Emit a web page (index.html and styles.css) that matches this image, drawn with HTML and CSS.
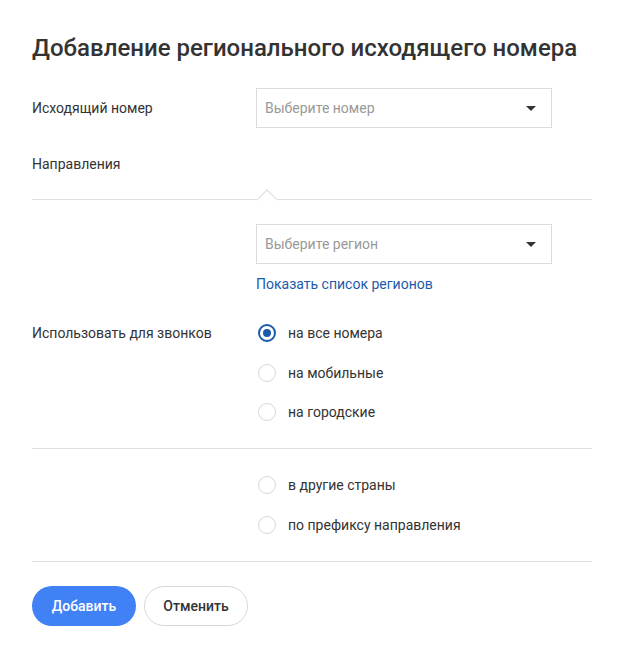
FILE: index.html
```html
<!DOCTYPE html>
<html lang="ru">
<head>
<meta charset="utf-8">
<title>Добавление регионального исходящего номера</title>
<link rel="stylesheet" href="styles.css">
</head>
<body>
<div class="page">
  <h1 class="title">Добавление регионального исходящего номера</h1>

  <div class="row row-number">
    <div class="label">Исходящий номер</div>
    <div class="select">
      <span class="placeholder">Выберите номер</span>
      <span class="caret"></span>
    </div>
  </div>

  <div class="section-label">Направления</div>

  <div class="divider notched"><span class="notch"></span></div>

  <div class="row row-region">
    <div class="label"></div>
    <div class="field">
      <div class="select">
        <span class="placeholder">Выберите регион</span>
        <span class="caret"></span>
      </div>
      <a class="link" href="#">Показать список регионов</a>
    </div>
  </div>

  <div class="row row-use">
    <div class="label">Использовать для звонков</div>
    <div class="radios">
      <label class="radio checked"><span class="dot"></span>на все номера</label>
      <label class="radio"><span class="dot"></span>на мобильные</label>
      <label class="radio"><span class="dot"></span>на городские</label>
    </div>
  </div>

  <div class="divider div2"></div>

  <div class="row row-other">
    <div class="label"></div>
    <div class="radios">
      <label class="radio"><span class="dot"></span>в другие страны</label>
      <label class="radio"><span class="dot"></span>по префиксу направления</label>
    </div>
  </div>

  <div class="divider div3"></div>

  <div class="actions">
    <button class="btn btn-primary">Добавить</button>
    <button class="btn btn-secondary">Отменить</button>
  </div>
</div>
</body>
</html>
```

FILE: styles.css
```css
* { box-sizing: border-box; }
html, body { margin: 0; padding: 0; background: #fff; }
body {
  font-family: Roboto, "Liberation Sans", Arial, sans-serif;
  color: #333;
  font-size: 14px;
  line-height: 20px;
}
.page {
  padding: 33px 32px 0 32px;
}
.title {
  margin: 0;
  font-size: 24px;
  line-height: 30px;
  font-weight: 500;
  color: #333;
}
.row {
  display: grid;
  grid-template-columns: 224px 296px;
  align-items: center;
}
.row-number { margin-top: 25px; }
.select {
  height: 40px;
  border: 1px solid #dcdcdc;
  display: flex;
  align-items: center;
  justify-content: space-between;
  padding: 0 15px 0 8px;
}
.placeholder { color: #999; }
.caret {
  width: 0;
  height: 0;
  border-left: 5px solid transparent;
  border-right: 5px solid transparent;
  border-top: 5px solid #333;
}
.section-label { margin-top: 26px; }
.divider {
  height: 1px;
  background: #e0e0e0;
}
.notched {
  position: relative;
  margin-top: 25px;
}
.notch {
  position: absolute;
  left: 228px;
  top: -6px;
  width: 14px;
  height: 14px;
  background: #fff;
  border-left: 1px solid #e0e0e0;
  border-top: 1px solid #e0e0e0;
  transform: rotate(45deg) scale(1.1, 1.1);
  transform-origin: center;
}
.row-region { margin-top: 24px; align-items: start; }
.field { display: flex; flex-direction: column; }
.link {
  margin-top: 10px;
  color: #1a5aab;
  text-decoration: none;
}
.row-use { margin-top: 29px; align-items: start; }
.radios {
  display: flex;
  flex-direction: column;
  gap: 19.5px;
}
.radio {
  display: flex;
  align-items: center;
  gap: 12px;
  padding-left: 2px;
  height: 20px;
}
.dot {
  width: 18px;
  height: 18px;
  border-radius: 50%;
  border: 1px solid #d8d8d8;
  display: inline-flex;
  align-items: center;
  justify-content: center;
  flex: none;
}
.radio.checked .dot {
  border: 2px solid #1a5aab;
}
.radio.checked .dot::after {
  content: "";
  width: 8px;
  height: 8px;
  border-radius: 50%;
  background: #1a5aab;
}
.div2 { margin-top: 26px; }
.row-other { margin-top: 26px; align-items: start; }
.div3 { margin-top: 26px; }
.actions {
  display: flex;
  gap: 8px;
  margin-top: 24px;
}
.btn {
  width: 104px;
  height: 40px;
  border-radius: 20px;
  font-family: Roboto, "Liberation Sans", Arial, sans-serif;
  font-size: 14px;
  font-weight: 500;
  cursor: pointer;
}
.btn-primary {
  background: #4181f6;
  color: #fff;
  border: none;
}
.btn-secondary {
  background: #fff;
  color: #333;
  border: 1px solid #d8d8d8;
}
```
